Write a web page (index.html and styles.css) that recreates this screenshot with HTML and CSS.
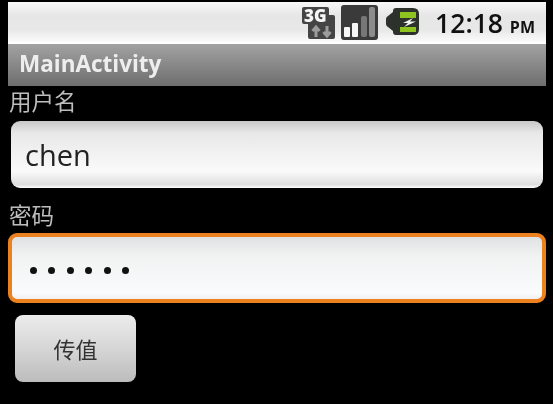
FILE: index.html
```html
<!DOCTYPE html>
<html lang="zh">
<head>
    <meta charset="UTF-8" />
    <title>MainActivity</title>
    <link rel="stylesheet" href="styles.css">
</head>
<body>
    <div class="screen">
        <div class="status-bar">
            <svg class="status-icon icon-3g" width="34" height="36" viewBox="-1 -4 34 36">
                <path d="M2 0H25Q27 0 27 2V8H31Q33 8 33 10V30Q33 32 31 32H8Q6 32 6 30V17H2Q0 17 0 15V2Q0 0 2 0Z" fill="#444"/>
                <text class="net-label" x="2" y="14.500">3G</text>
                <path d="M14 30V21M10.500 24L14 20L17.500 24" fill="none" stroke="#9c9c9c" stroke-width="3"/>
                <path d="M25 19V28M21.500 25L25 29L28.500 25" fill="none" stroke="#9c9c9c" stroke-width="3"/>
            </svg>
            <svg class="status-icon icon-signal" width="37" height="35" viewBox="0 0 37 35">
                <rect width="37" height="35" rx="3" fill="#3a3a3a"/>
                <rect x="3" y="22" width="6" height="10" rx="1" fill="#f6f6f6"/>
                <rect x="11" y="18" width="6" height="14" rx="1" fill="#f6f6f6"/>
                <rect x="20" y="11" width="6" height="21" rx="2" fill="#777"/>
                <rect x="28" y="2" width="6" height="30" rx="2" fill="#8c8c8c"/>
            </svg>
            <svg class="status-icon icon-battery" width="33" height="27" viewBox="0 0 33 27">
                <path d="M0 11Q0 9 2 8L7 4V3Q7 0 10 0H27Q33 0 33 6V21Q33 27 27 27H10Q7 27 7 24V23L2 19Q0 18 0 16Z" fill="#2c312b"/>
                <rect x="14" y="4" width="16" height="6" fill="#8fc31f"/>
                <rect x="14" y="19" width="16" height="5" fill="#8fc31f"/>
                <path d="M27 10L17 15H22L18 19L30 13.500H24L27 10Z" fill="#f4f4f4"/>
            </svg>
            <div class="clock">12:18 <span class="ampm">PM</span></div>
        </div>
        <div class="title-bar">MainActivity</div>
        <div class="content">
            <label class="field-label label-first">用户名</label>
            <div class="text-field">chen</div>
            <label class="field-label label-second">密码</label>
            <div class="text-field focused">
                <span class="dot"></span><span class="dot"></span><span class="dot"></span><span class="dot"></span><span class="dot"></span><span class="dot"></span>
            </div>
            <button class="send-btn" type="button">传值</button>
        </div>
    </div>
</body>
</html>
```

FILE: styles.css
```css
body {
    margin: 0;
    background: #000;
    font-family: "Roboto", "Noto Sans CJK SC", sans-serif;
}
.screen {
    width: 538px;
    height: 402px;
    margin: 2px 0 0 8px;
    overflow: hidden;
}
.status-bar {
    height: 42px;
    box-sizing: border-box;
    padding: 2px 11px 0 0;
    display: flex;
    align-items: center;
    justify-content: flex-end;
    background: linear-gradient(#f8f8f8, #e6e6e6 35%, #e8e8e8 70%, #fbfbfb);
    border-bottom: 2px solid #fff;
    color: #111;
}
.status-icon {
    filter: blur(0.6px);
}
.net-label {
    font-family: "Open Sans", sans-serif;
    font-size: 17px;
    font-weight: 800;
    fill: #f6f6f6;
}
.icon-3g {
    margin: 0 6px 4px 0;
}
.icon-signal {
    margin: 0 8px 2px 0;
}
.icon-battery {
    margin: 0 16px 3px 0;
}
.clock {
    font-family: "Open Sans", sans-serif;
    font-size: 26.5px;
    font-weight: 600;
    white-space: nowrap;
    filter: blur(0.5px);
}
.ampm {
    font-size: 16px;
    font-weight: 700;
}
.title-bar {
    height: 42px;
    box-sizing: border-box;
    padding: 0 0 4px 11px;
    display: flex;
    align-items: center;
    background: linear-gradient(#a2a2a2, #6e6e6e);
    color: #eee;
    font-family: "Open Sans", sans-serif;
    font-size: 22.5px;
    font-weight: 700;
    filter: blur(0.5px);
}
.content {
    display: flex;
    flex-direction: column;
    align-items: flex-start;
}
.field-label {
    color: #bdbdbd;
    font-size: 22.5px;
    line-height: 24px;
    margin-left: 1px;
    filter: blur(0.5px);
}
.label-first {
    margin-top: 4px;
    margin-bottom: 7px;
}
.label-second {
    margin-top: 16px;
    margin-bottom: 5px;
}
.text-field {
    width: 532px;
    height: 67px;
    margin-left: 3px;
    box-sizing: border-box;
    padding-left: 14px;
    display: flex;
    align-items: center;
    border-radius: 9px;
    background: linear-gradient(#c8c8c8, #e8e8e8 18%, #fafafa 75%, #dedede 95%, #fff);
    color: #222;
    font-size: 29px;
    font-family: "Open Sans", sans-serif;
    filter: blur(0.6px);
}
.focused {
    width: 538px;
    height: 70px;
    margin-left: 0;
    padding-left: 17.5px;
    padding-top: 4px;
    gap: 11.5px;
    border: 4px solid #ec8120;
    background: linear-gradient(#dfe1e2, #f1f2f2 30%, #fafbfc 90%, #f0f0f0);
}
.dot {
    width: 7px;
    height: 7px;
    border-radius: 50%;
    background: #111;
}
.send-btn {
    width: 121px;
    height: 67px;
    margin: 12px 0 0 7px;
    padding: 0 0 2px;
    border: none;
    border-radius: 8px;
    background: linear-gradient(#ececec, #d6d6d6 50%, #bcbcbc);
    color: #333;
    font-family: inherit;
    font-size: 22px;
    filter: blur(0.5px);
}
```
